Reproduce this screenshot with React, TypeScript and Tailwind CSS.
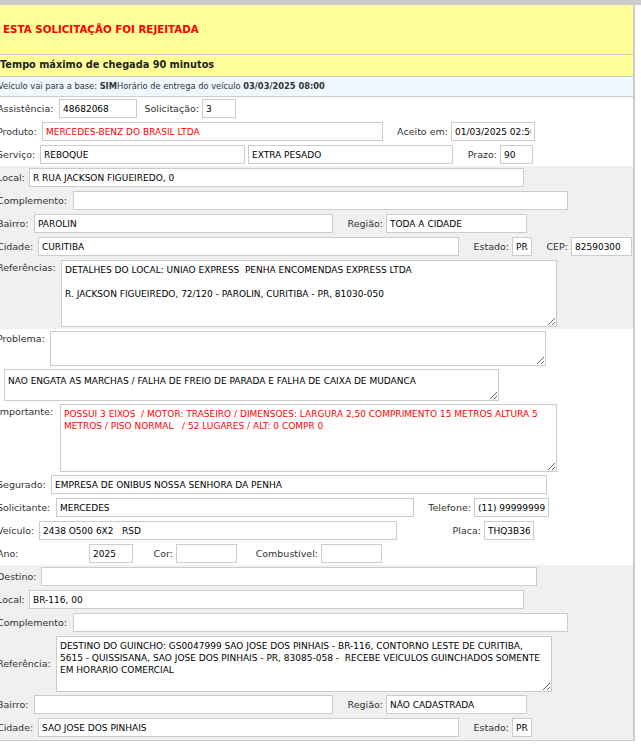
import React, { Fragment } from "react";

type Seg = { l: string; x: number; w: number; v: string; red?: boolean; pr?: number };

const FONT = "font-['DejaVu_Sans',sans-serif]";

function Label({ text, w, right }: { text: string; w: number; right: boolean }) {
  return (
    <span
      className={`flex flex-none whitespace-nowrap text-[9.5px] leading-[12px] text-[#333] ${right ? "justify-end pr-[3px]" : "justify-start"}`}
      style={{ width: w }}
    >
      {text}
    </span>
  );
}

function Field({ w, v, red }: { w: number; v: string; red?: boolean }) {
  return (
    <input
      readOnly
      value={v}
      className={`h-[19px] flex-none border border-[#cccccc] bg-white px-[3px] text-[9px] outline-none ${FONT} ${red ? "text-[#ff0000]" : "text-black"}`}
      style={{ width: w }}
    />
  );
}

function Line({ segs }: { segs: Seg[] }) {
  let cur = -3;
  return (
    <div className="flex h-[23px] items-center">
      {segs.map((s, i) => {
        const lw = s.x - cur;
        cur = s.x + s.w;
        return (
          <Fragment key={i}>
            <Label text={s.l} w={lw} right={i > 0} />
            <Field w={s.w} v={s.v} red={s.red} />
          </Fragment>
        );
      })}
    </div>
  );
}

const areaCls = `flex-none border border-[#cccccc] bg-white px-[3px] pt-[3px] text-[9px] leading-[12px] outline-none ${FONT}`;

export default function App() {
  return (
    <div className={`${FONT} min-h-[754px] bg-white`}>
      <div className="h-[5px] w-full bg-[#cccccc]" />
      <div className="w-[635px] overflow-hidden border-r-2 border-b border-[#cccccc]">
        <div className="flex h-[50px] items-center border-b border-[#cccccc] bg-[#ffff99] pl-[3px] text-[10.3px] font-bold text-[#ff0000]">
          ESTA SOLICITAÇÃO FOI REJEITADA
        </div>
        <div className="flex h-[22px] items-center border-b border-[#cccccc] bg-[#ffff99] text-[9.75px] font-bold text-[#222]">
          Tempo máximo de chegada 90 minutos
        </div>
        <div className="flex h-[20px] items-center border-b border-[#cccccc] bg-[#f0f8ff] text-[8.3px] text-[#333]">
          <span className="-ml-[2px] whitespace-nowrap">
            Veículo vai para a base: <b>SIM</b>Horário de entrega do veículo <b>03/03/2025 08:00</b>
          </span>
        </div>

        {/* white section 1 */}
        <div className="bg-white">
          <div className="-ml-[3px]">
            <Line segs={[{ l: "Assistência:", x: 59, w: 78, v: "48682068" }, { l: "Solicitação:", x: 202, w: 34, v: "3" }]} />
            <Line
              segs={[
                { l: "Produto:", x: 42, w: 341, v: "MERCEDES-BENZ DO BRASIL LTDA", red: true },
                { l: "Aceito em:", x: 451, w: 84, v: "01/03/2025 02:50" },
              ]}
            />
            <Line
              segs={[
                { l: "Serviço:", x: 40, w: 205, v: "REBOQUE" },
                { l: "", x: 248, w: 205, v: "EXTRA PESADO" },
                { l: "Prazo:", x: 500, w: 33, v: "90" },
              ]}
            />
          </div>
        </div>

        {/* gray section 1 */}
        <div className="bg-[#f0f0f0]">
          <div className="-ml-[3px]">
            <Line segs={[{ l: "Local:", x: 29, w: 495, v: "R RUA JACKSON FIGUEIREDO, 0" }]} />
            <Line segs={[{ l: "Complemento:", x: 73, w: 495, v: "" }]} />
            <Line segs={[{ l: "Bairro:", x: 34, w: 299, v: "PAROLIN" }, { l: "Região:", x: 386, w: 141, v: "TODA A CIDADE" }]} />
            <Line
              segs={[
                { l: "Cidade:", x: 38, w: 421, v: "CURITIBA" },
                { l: "Estado:", x: 512, w: 20, v: "PR" },
                { l: "CEP:", x: 571, w: 61, v: "82590300" },
              ]}
            />
            <div className="flex h-[71px] items-start">
              <span className="w-[64px] flex-none pt-[4px] text-[9.5px] leading-[12px] text-[#333]">Referências:</span>
              <textarea
                readOnly
                className={`${areaCls} mt-[2px] h-[67px] w-[496px] text-black`}
                value={"DETALHES DO LOCAL: UNIAO EXPRESS  PENHA ENCOMENDAS EXPRESS LTDA\n\nR. JACKSON FIGUEIREDO, 72/120 - PAROLIN, CURITIBA - PR, 81030-050"}
              />
            </div>
          </div>
        </div>

        {/* white section 2 */}
        <div className="bg-white">
          <div className="-ml-[3px]">
            <div className="flex h-[39px] items-start">
              <span className="w-[53px] flex-none pt-[4px] text-[9.5px] leading-[12px] text-[#333]">Problema:</span>
              <textarea readOnly className={`${areaCls} mt-[2px] h-[35px] w-[496px] text-black`} value="" />
            </div>
            <div className="flex h-[35px] items-start">
              <span className="w-[7px] flex-none" />
              <textarea
                readOnly
                className={`${areaCls} mt-[1px] h-[32px] w-[495px] pt-[5px] text-black`}
                value="NAO ENGATA AS MARCHAS / FALHA DE FREIO DE PARADA E FALHA DE CAIXA DE MUDANCA"
              />
            </div>
            <div className="flex h-[70px] items-start">
              <span className="w-[63px] flex-none pt-[3px] text-[9.5px] leading-[12px] text-[#333]">Importante:</span>
              <textarea
                readOnly
                className={`${areaCls} mt-[1px] h-[68px] w-[497px] text-[#ff0000]`}
                value={"POSSUI 3 EIXOS  / MOTOR: TRASEIRO / DIMENSOES: LARGURA 2,50 COMPRIMENTO 15 METROS ALTURA 5\nMETROS / PISO NORMAL   / 52 LUGARES / ALT: 0 COMPR 0"}
              />
            </div>
            <Line segs={[{ l: "Segurado:", x: 51, w: 496, v: "EMPRESA DE ONIBUS NOSSA SENHORA DA PENHA" }]} />
            <Line segs={[{ l: "Solicitante:", x: 56, w: 358, v: "MERCEDES" }, { l: "Telefone:", x: 474, w: 75, v: "(11) 999999999" }]} />
            <Line segs={[{ l: "Veículo:", x: 39, w: 358, v: "2438 O500 6X2   RSD" }, { l: "Placa:", x: 484, w: 50, v: "THQ3B36" }]} />
            <Line
              segs={[
                { l: "Ano:", x: 89, w: 44, v: "2025" },
                { l: "Cor:", x: 176, w: 61, v: "" },
                { l: "Combustível:", x: 321, w: 61, v: "" },
              ]}
            />
          </div>
        </div>

        {/* gray section 2 */}
        <div className="bg-[#f0f0f0] pb-[1px]">
          <div className="-ml-[3px]">
            <Line segs={[{ l: "Destino:", x: 41, w: 496, v: "" }]} />
            <Line segs={[{ l: "Local:", x: 29, w: 495, v: "BR-116, 00" }]} />
            <Line segs={[{ l: "Complemento:", x: 73, w: 495, v: "" }]} />
            <div className="flex h-[59px] items-center">
              <span className="w-[59px] flex-none text-[9.5px] leading-[12px] text-[#333]">Referência:</span>
              <textarea
                readOnly
                className={`${areaCls} h-[56px] w-[496px] text-black`}
                value={"DESTINO DO GUINCHO: GS0047999 SAO JOSE DOS PINHAIS - BR-116, CONTORNO LESTE DE CURITIBA,\n5615 - QUISSISANA, SAO JOSE DOS PINHAIS - PR, 83085-058 -  RECEBE VEICULOS GUINCHADOS SOMENTE\nEM HORARIO COMERCIAL"}
              />
            </div>
            <Line segs={[{ l: "Bairro:", x: 34, w: 299, v: "" }, { l: "Região:", x: 386, w: 141, v: "NÃO CADASTRADA" }]} />
            <Line segs={[{ l: "Cidade:", x: 38, w: 421, v: "SAO JOSE DOS PINHAIS" }, { l: "Estado:", x: 512, w: 20, v: "PR" }]} />
          </div>
        </div>
      </div>
    </div>
  );
}
